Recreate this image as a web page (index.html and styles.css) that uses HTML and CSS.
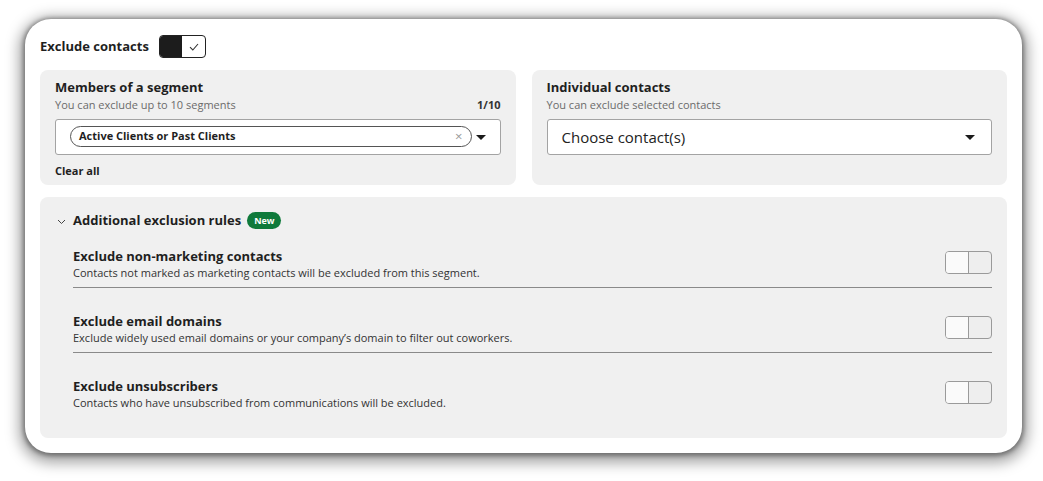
FILE: index.html
```html
<!DOCTYPE html>
<html lang="en">
<head>
  <meta charset="UTF-8" />
  <meta name="viewport" content="width=device-width, initial-scale=1" />
  <title>Exclude contacts</title>
  <link rel="stylesheet" href="styles.css">
</head>
<body>

  <div class="card">
    <!-- Header with main toggle -->
    <div class="head">
      <span class="head-title">Exclude contacts</span>
      <span class="toggle on">
        <span class="half dark"></span>
        <span class="half">
          <svg width="10" height="8" viewBox="0 0 10 8"><path d="M1 4.2 L3.8 7 L9 1" fill="none" stroke="#333" stroke-width="1.1"/></svg>
        </span>
      </span>
    </div>

    <div class="cols">
      <div class="panel">
        <div class="panel-title">Members of a segment</div>
        <div class="sub-row">
          <span class="sub">You can exclude up to 10 segments</span>
          <span class="count">1/10</span>
        </div>
        <div class="select">
          <span class="pill">
            <span class="pill-text">Active Clients or Past Clients</span>
            <span class="pill-x">&times;</span>
          </span>
          <span class="caret"></span>
        </div>
        <div class="clear">Clear all</div>
      </div>

      <div class="panel">
        <div class="panel-title">Individual contacts</div>
        <div class="sub-row">
          <span class="sub">You can exclude selected contacts</span>
        </div>
        <div class="select choose">
          <span class="placeholder">Choose contact(s)</span>
          <span class="caret"></span>
        </div>
      </div>
    </div>

    <div class="panel rules">
      <div class="rules-head">
        <svg class="chev" width="9" height="6" viewBox="0 0 9 6"><path d="M1 1 L4.5 4.5 L8 1" fill="none" stroke="#444" stroke-width="1"/></svg>
        <span class="rules-title">Additional exclusion rules</span>
        <span class="badge">New</span>
      </div>

      <div class="rule">
        <div>
          <div class="rule-title">Exclude non-marketing contacts</div>
          <div class="rule-desc">Contacts not marked as marketing contacts will be excluded from this segment.</div>
        </div>
        <span class="toggle"><span class="half light"></span><span class="half"></span></span>
      </div>

      <div class="rule">
        <div>
          <div class="rule-title">Exclude email domains</div>
          <div class="rule-desc">Exclude widely used email domains or your company’s domain to filter out coworkers.</div>
        </div>
        <span class="toggle"><span class="half light"></span><span class="half"></span></span>
      </div>

      <div class="rule last">
        <div>
          <div class="rule-title">Exclude unsubscribers</div>
          <div class="rule-desc">Contacts who have unsubscribed from communications will be excluded.</div>
        </div>
        <span class="toggle"><span class="half light"></span><span class="half"></span></span>
      </div>
    </div>
  </div>

</body>
</html>
```

FILE: styles.css
```css
body {
  margin: 0;
  padding: 19px 21px 28px 25px;
  background: #fff;
  font-family: "Open Sans", Arial, sans-serif;
  color: #1f1f1f;
}
.card {
  height: 434px;
  box-sizing: border-box;
  background: #fff;
  border-radius: 26px;
  box-shadow: 0 1px 4px 2px rgba(0,0,0,0.35), 0 4px 14px 6px rgba(0,0,0,0.35);
  padding: 16px 15px 15px 15px;
}
.head {
  display: flex;
  align-items: center;
  gap: 10px;
  height: 23px;
}
.head-title {
  font-weight: 700;
  font-size: 13px;
  margin-top: -1px;
}
.toggle {
  display: flex;
  width: 47px;
  height: 23px;
  box-sizing: border-box;
  border: 1px solid #9a9a9a;
  border-radius: 4px;
  overflow: hidden;
  background: #eee;
  flex-shrink: 0;
}
.toggle.on {
  border-color: #222;
  background: #fff;
}
.half {
  flex: 1;
  display: flex;
  align-items: center;
  justify-content: center;
}
.half.dark {
  background: #1c1c1c;
}
.half.light {
  background: #fafafa;
  border-right: 1px solid #9a9a9a;
}
.cols {
  display: grid;
  grid-template-columns: 1fr 1fr;
  gap: 16px;
  margin-top: 12px;
}
.panel {
  background: #f0f0f0;
  border-radius: 8px;
  padding: 9px 15px 0 15px;
  height: 115px;
  box-sizing: border-box;
}
.panel-title {
  font-weight: 700;
  font-size: 13px;
  line-height: 17px;
}
.sub-row {
  display: flex;
  justify-content: space-between;
  align-items: baseline;
  margin-top: 1px;
}
.sub {
  font-size: 11px;
  color: #6b6b6b;
  line-height: 15px;
}
.count {
  font-size: 11px;
  font-weight: 700;
  color: #333;
}
.select {
  margin-top: 7px;
  height: 36px;
  box-sizing: border-box;
  background: #fff;
  border: 1px solid #a3a3a3;
  border-radius: 3px;
  display: flex;
  align-items: center;
  padding: 0 14px 0 14px;
}
.pill {
  flex: 1;
  display: flex;
  align-items: center;
  justify-content: space-between;
  height: 21px;
  box-sizing: border-box;
  border: 1px solid #555;
  border-radius: 11px;
  padding: 0 8px 1px 8px;
  margin-right: 4px;
  margin-top: -2px;
}
.pill-text {
  font-size: 11px;
  font-weight: 700;
}
.pill-x {
  font-size: 13px;
  color: #999;
}
.caret {
  width: 0;
  height: 0;
  border-left: 5px solid transparent;
  border-right: 5px solid transparent;
  border-top: 5px solid #1a1a1a;
}
.choose {
  justify-content: space-between;
  padding-right: 16px;
}
.placeholder {
  font-size: 15px;
  color: #222;
}
.clear {
  font-size: 11px;
  font-weight: 700;
  margin-top: 8px;
}
.rules {
  margin-top: 12px;
  height: 241px;
  padding: 14px 15px 0 17px;
}
.rules-head {
  display: flex;
  align-items: center;
  height: 18px;
}
.chev {
  margin-right: 7px;
  margin-top: 3px;
}
.rules-title {
  font-weight: 700;
  font-size: 13px;
}
.badge {
  margin-left: 6px;
  background: #0f7a3b;
  color: #fff;
  font-size: 9px;
  font-weight: 700;
  border-radius: 9px;
  padding: 1px 7px;
  line-height: 15px;
}
.rule {
  margin-left: 16px;
  display: flex;
  justify-content: space-between;
  align-items: flex-start;
  border-bottom: 1px solid #8a8a8a;
  padding: 19px 0 7px 0;
}
.rule .toggle {
  margin-top: 3px;
}
.rule + .rule {
  padding-top: 25px;
}
.rule.last {
  border-bottom: none;
}
.rule-title {
  font-weight: 700;
  font-size: 13px;
  line-height: 17px;
}
.rule-desc {
  font-size: 11px;
  line-height: 15px;
  color: #333;
}
```
